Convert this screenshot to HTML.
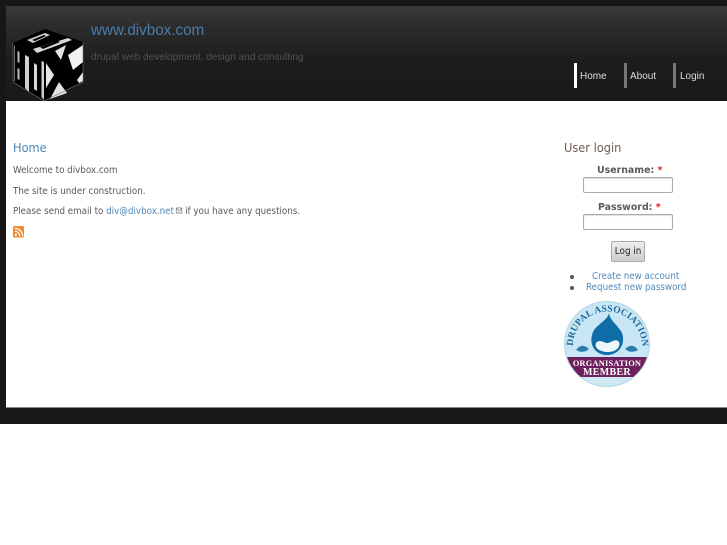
<!DOCTYPE html>
<html><head><meta charset="utf-8"><title>www.divbox.com</title>
<style>
html,body{margin:0;padding:0;background:#fff;}
body{width:727px;height:545px;position:relative;overflow:hidden;font-family:"DejaVu Sans",sans-serif;font-size:9.4px;color:#5a5a5a;}
.t{position:absolute;white-space:nowrap;line-height:12px;filter:blur(.3px);transform-origin:0 50%;}
.n{transform:scaleX(.93);}
a{color:#5289b8;text-decoration:none;}
.inp{position:absolute;left:583px;width:88px;height:14px;border:1px solid #aaa;border-radius:2px;background:#fff;box-shadow:inset 0 1px 1px #ddd;}
.bar{position:absolute;top:63px;width:3px;height:25px;}
</style></head><body>
<div style="position:absolute;left:0;top:0;width:727px;height:424px;background:#181717"></div>
<div style="position:absolute;left:5.6px;top:5.5px;width:722px;height:95.5px;background:linear-gradient(#3a3a3a 0,#2c2c2c 20px,#1d1d1d 55px,#191919 95px)"></div>
<div style="position:absolute;left:5.6px;top:101px;width:722px;height:307px;background:#fff"></div>
<div style="position:absolute;left:5.6px;top:407.4px;width:722px;height:1px;background:#888"></div>

<svg style="position:absolute;left:0;top:20px;filter:blur(.35px)" width="95" height="90" viewBox="0 0 95 90">
<polygon points="13,23 45,9 83,22 83,62 44,81 13,62" fill="#000"/>
<polygon points="14,25 15,26 15,62 14,61" fill="#777"/>
<polygon points="17.5,31 19.5,32 19.5,43 17.5,42" fill="#bbb"/>
<polygon points="17.5,48 19.5,49 19.5,60 17.5,59" fill="#bbb"/>
<polygon points="25,35 29,37 29,72 25,68" fill="#d0d0d0"/>
<polygon points="34,43 37,45 37,71 34,69" fill="#d8d8d8"/>
<polygon points="41.5,41 44,42 44,80 41.5,77" fill="#d0d0d0"/>
<polygon points="46,43 54,55 46,68" fill="#e6e6e6"/>
<polygon points="55,31 66,25 61,40" fill="#e4e4e4"/>
<polygon points="68,35 83,25 83,42 73,50" fill="#f2f2f2"/>
<polygon points="77,60 83,52 83,61 79,63" fill="#e8e8e8"/>
<polygon points="59,62 67,73 50,79" fill="#e2e2e2"/>
<polygon points="27,20 45,13 50,15 33,23" fill="#cfcfcf"/>
<polygon points="32,20 44,15 46,16 35,21" fill="#000"/>
<polygon points="33,29 68,18 72,20 37,33" fill="#d8d8d8"/>
<polygon points="40,27 58,21 60,22 43,29" fill="#000"/>
<polyline points="13,23 13,62 44,81 83,62 83,22" fill="none" stroke="#777" stroke-width=".6"/>
</svg>

<div class="t" style="left:91px;top:22px;font:16px/18px 'Liberation Sans',sans-serif;color:#4a7dab;transform:scaleX(.95)">www.divbox.com</div>
<div class="t" style="left:91px;top:50.5px;font:10.5px/13px 'Liberation Sans',sans-serif;color:#505050;transform:scaleX(.958)">drupal web development, design and consulting</div>

<div class="bar" style="left:574px;background:#fff"></div>
<div class="bar" style="left:624px;background:#777"></div>
<div class="bar" style="left:673px;background:#777"></div>
<div class="t" style="left:580px;top:70px;font:10.5px/13px 'Liberation Sans',sans-serif;color:#ddd;transform:scaleX(.95)">Home</div>
<div class="t" style="left:630px;top:70px;font:10.5px/13px 'Liberation Sans',sans-serif;color:#ddd;transform:scaleX(.95)">About</div>
<div class="t" style="left:680px;top:70px;font:10.5px/13px 'Liberation Sans',sans-serif;color:#ddd;transform:scaleX(.95)">Login</div>

<div class="t" style="left:13px;top:140px;font:12px/16px 'DejaVu Sans',sans-serif;color:#4d84b4;transform:scaleX(.95)">Home</div>
<div class="t n" style="left:13px;top:165px">Welcome to divbox.com</div>
<div class="t n" style="left:13px;top:186px">The site is under construction.</div>
<div class="t n" style="left:13px;top:206px">Please send email to <a>div@divbox.net</a><svg width="8" height="7" viewBox="0 0 8 7" style="margin:0 2px 0 2px"><rect x=".5" y="1" width="6" height="5" fill="none" stroke="#777" stroke-width=".8"/><path d="M.5 1.5L3.5 4L6.5 1.5" fill="none" stroke="#777" stroke-width=".8"/></svg>if you have any questions.</div>

<svg style="position:absolute;left:13px;top:226px;filter:blur(.3px)" width="11" height="12" viewBox="0 0 11 12">
<rect width="11" height="11.5" rx="1.5" fill="#f08a2c"/>
<circle cx="2.8" cy="8.8" r="1.2" fill="#fff"/>
<path d="M1.8 5.2a5 5 0 0 1 5 5M1.8 2.4a7.8 7.8 0 0 1 7.8 7.8" fill="none" stroke="#fff" stroke-width="1.2"/>
</svg>

<div class="t" style="left:564px;top:140px;font:12px/16px 'DejaVu Sans',sans-serif;color:#6f5a52;transform:scaleX(.95)">User login</div>
<div class="t" style="left:597px;top:165px;font-weight:bold;font-size:10px;transform:scaleX(.94)">Username: <span style="color:#e02020">*</span></div>
<div class="inp" style="top:177px"></div>
<div class="t" style="left:598px;top:202px;font-weight:bold;font-size:10px;transform:scaleX(.94)">Password: <span style="color:#e02020">*</span></div>
<div class="inp" style="top:214px"></div>
<div style="position:absolute;left:611px;top:241px;width:32px;height:19px;border:1px solid #aaa;border-radius:2px;background:linear-gradient(#eee,#ccc);text-align:center;font:10px/19px 'DejaVu Sans',sans-serif;color:#222;filter:blur(.2px)"><span style="display:inline-block;transform:scaleX(.88)">Log in</span></div>
<div style="position:absolute;left:570px;top:275px;width:4px;height:4px;border-radius:50%;background:#555"></div>
<div style="position:absolute;left:570px;top:286px;width:4px;height:4px;border-radius:50%;background:#555"></div>
<div class="t n" style="left:592px;top:271px;"><a>Create new account</a></div>
<div class="t n" style="left:586px;top:282px;"><a>Request new password</a></div>

<svg style="position:absolute;left:563px;top:300px;filter:blur(.3px)" width="88" height="88" viewBox="0 0 88 88">
<defs>
<clipPath id="c"><circle cx="44" cy="44" r="42.5"/></clipPath>
<path id="arc" d="M10 46a34.5 34.5 0 0 1 69 0"/>
</defs>
<circle cx="44" cy="44" r="43" fill="#c9e6f5"/>
<g clip-path="url(#c)">
<rect x="0" y="57" width="88" height="20" fill="#6e1f5e"/>
<rect x="0" y="77" width="88" height="11" fill="#cfe8f4"/>
</g>
<circle cx="44" cy="44" r="42.5" fill="none" stroke="#b5d8ea" stroke-width="1"/>
<path d="M46 13C45 20 34 24 30 32C25 44 32 55 44 55C56 55 63 44 59 33C55 25 47 21 46 13Z" fill="#0f6ea8"/>
<path d="M33 43C37 38 42 44 45 43C49 42 53 38 56 42C58 47 53 52 45 52C37 52 31 48 33 43Z" fill="#eef7fb"/>
<path d="M13 50q6-8 13-1q-6 5-13 1zM62 49q7-7 13 1q-7 4-13-1z" fill="#2a7ba8"/>
<text font-family="'Liberation Serif',serif" font-size="9.5" font-weight="bold" fill="#1f6a9c" letter-spacing=".15"><textPath href="#arc" startOffset="0">DRUPAL ASSOCIATION</textPath></text>
<text x="44" y="66" text-anchor="middle" font-family="'Liberation Serif',serif" font-size="8.4" font-weight="bold" fill="#fff" letter-spacing=".2">ORGANISATION</text>
<text x="44" y="75" text-anchor="middle" font-family="'Liberation Serif',serif" font-size="10" font-weight="bold" fill="#fff" letter-spacing=".3">MEMBER</text>
</svg>
</body></html>
